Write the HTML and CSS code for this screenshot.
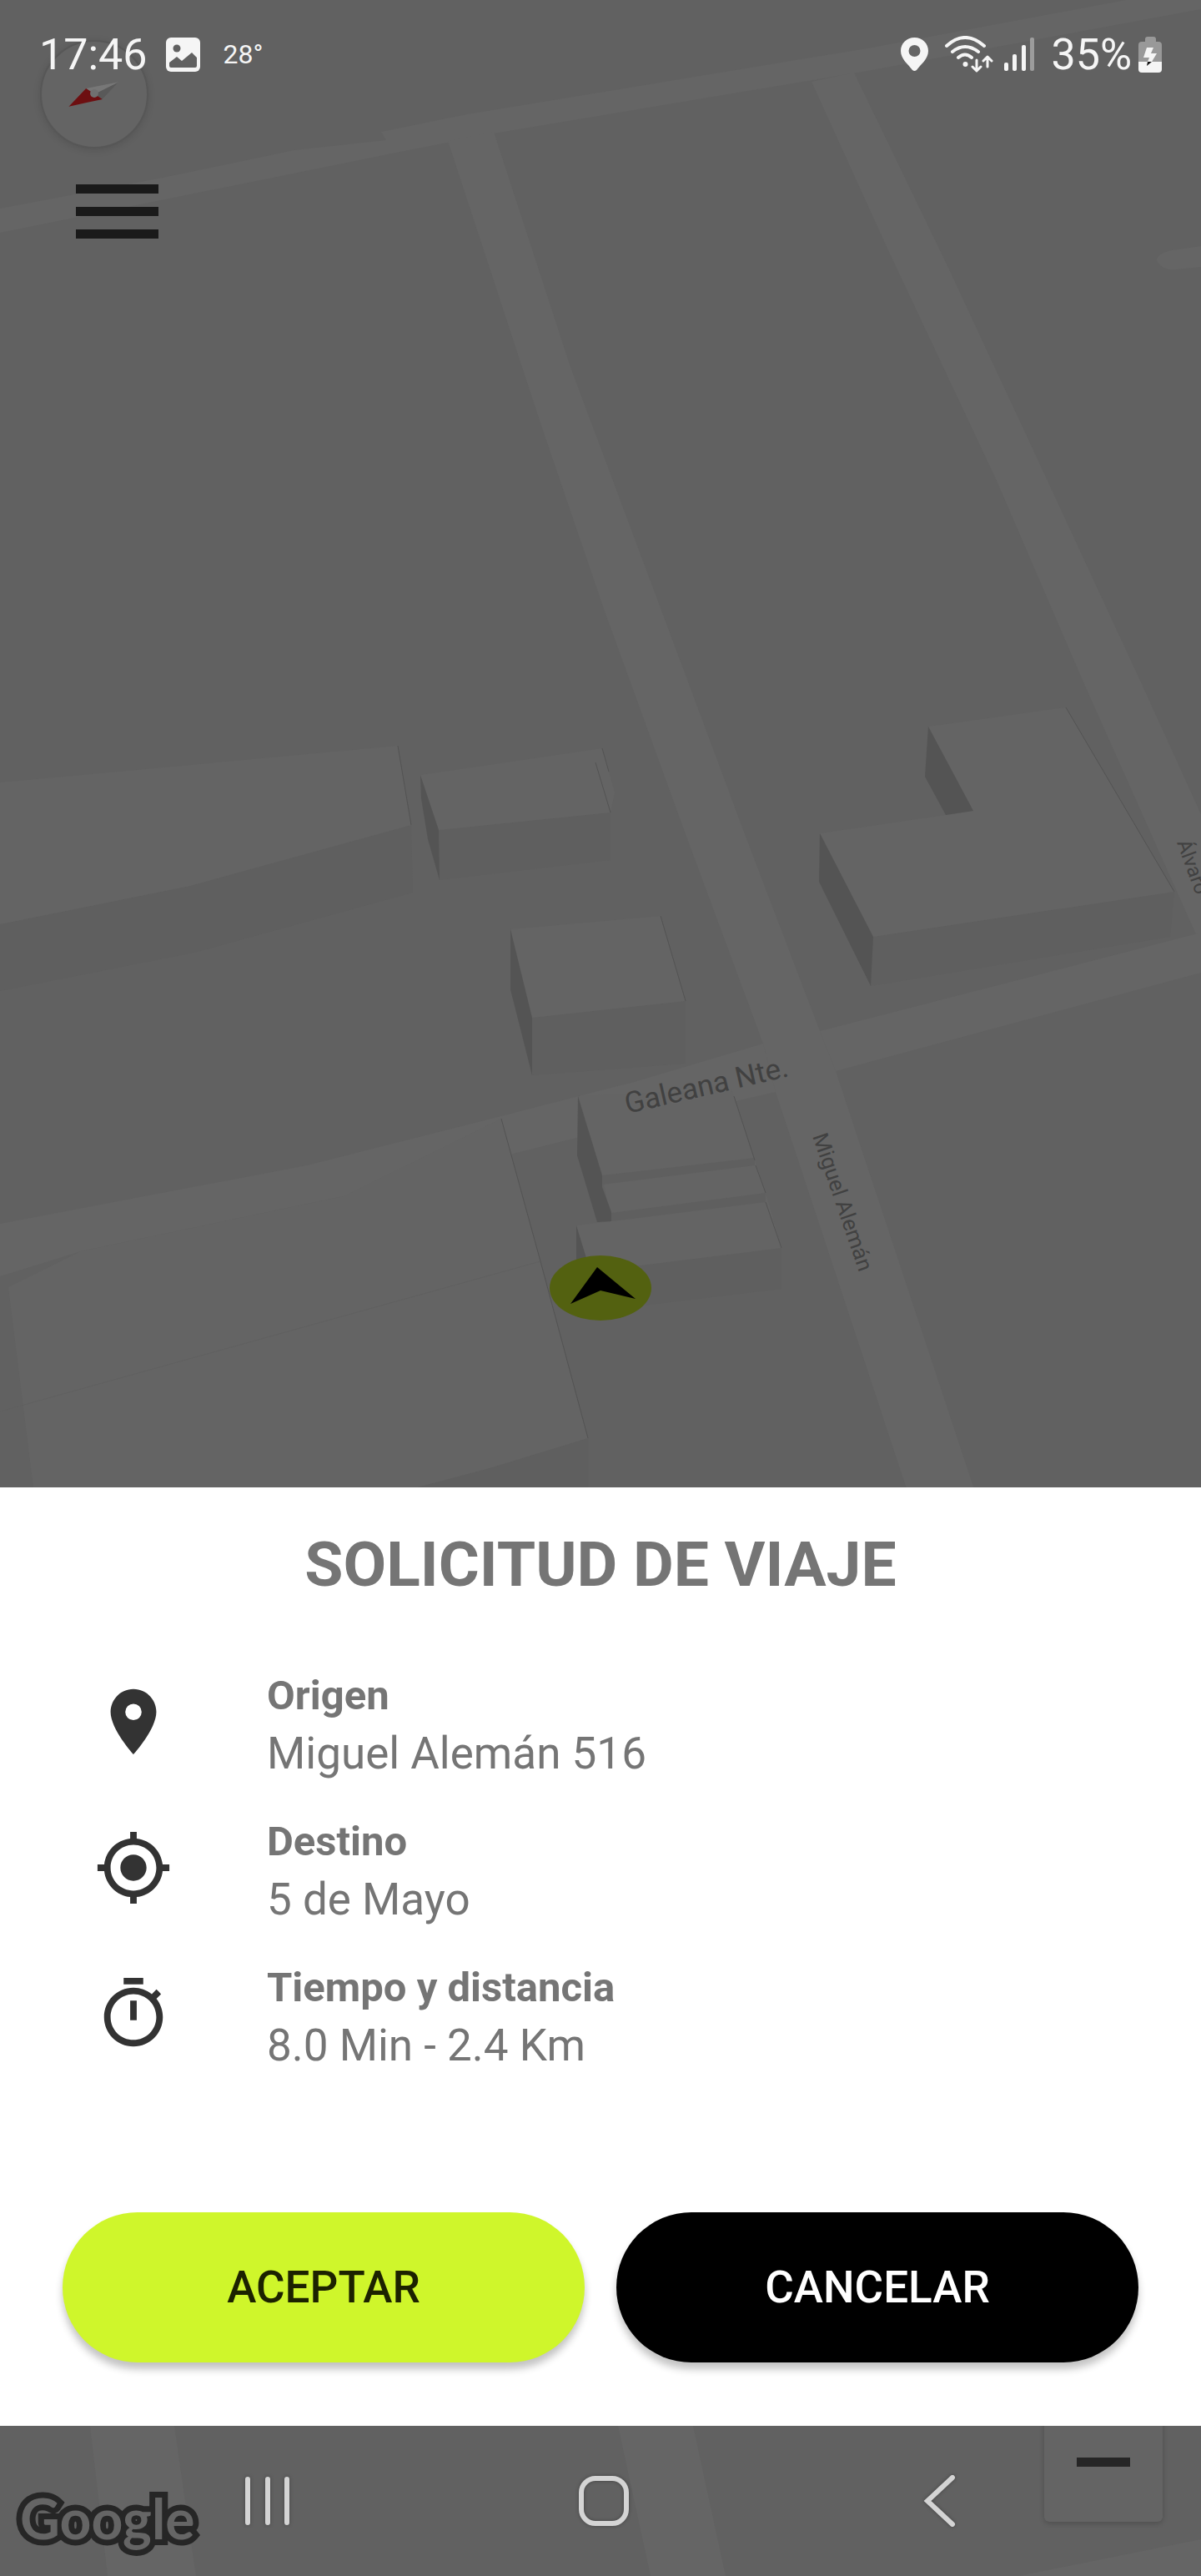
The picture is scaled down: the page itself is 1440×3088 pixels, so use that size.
FILE: index.html
```html
<!DOCTYPE html>
<html lang="es">
<head>
<meta charset="utf-8">
<meta name="viewport" content="width=device-width, initial-scale=1">
<title>Solicitud de viaje</title>
<link rel="stylesheet" href="styles.css">
</head>
<body>
<div class="screen">
  <svg class="map" viewBox="0 0 1440 3088" preserveAspectRatio="xMidYMid slice" role="img" aria-label="Mapa">
    <g class="road">
      <path d="M0 250L200 212L353 180L463 168L457 158L560 137L1040 58L1350 0H1440V11L1040 85L592 160L480 182L0 279Z"/>
      <path d="M537 169L592 158L684 440L826 820L893 1000L983 1236L1002 1284L1173 1800H1092L930 1309L915 1251L822 1000L725 733L647 504Z"/>
      <path d="M973 98L1024 87L1139 325L1240 542L1369 820L1440 976V1130L1434 1120L1300 820L1194 574L1065 300Z"/>
      <path d="M983 1236L1440 1118V1166L1002 1284Z"/>
      <path d="M0 1467L368 1397L601 1338L760 1297L915 1251L930 1309L691 1364L412 1434L97 1500L0 1530Z"/>
      <path d="M1440 295L1405 300Q1387 304 1387 312Q1392 324 1410 323L1440 320Z"/>
      <path d="M108 2908H209L235 3088H129ZM741 2908H831L870 3088H780ZM1221 3088L1440 3044V3088Z"/>
    </g>
    <g class="side">
      <path d="M0 1108L228 1062L493 989L495 1070L233 1142L0 1188Z"/>
      <path d="M526 995L732 974V1031L527 1055Z"/>
      <path d="M638 1220L822 1200V1275L638 1289Z"/>
      <path d="M1047 1123L1408 1069L1403 1123L1044 1182Z"/>
      <path d="M705 1724V1783H500L587 1760Z"/>
      <path d="M703 1525L937 1496V1545L703 1573Z"/>
    </g>
    <g class="roof">
      <path d="M0 938L477 894L493 989L228 1062L0 1108Z"/>
      <path d="M504 929L722 897L737 950L732 974L526 995Z"/>
      <path d="M612 1114L792 1098L822 1200L638 1220Z"/>
      <path d="M1113 871L1278 848L1408 1069L1047 1123L983 999L1167 972Z"/>
      <path d="M601 1341L648 1512L705 1724L587 1760L500 1783H40L10 1543L97 1500L412 1434Z"/>
      <path d="M693 1314L877 1306L918 1430L937 1496L703 1525L691 1469L733 1464L722 1409Z"/>
    </g>
    <g class="strip">
      <path d="M722 1409L905 1388V1397L722 1420Z"/>
      <path d="M733 1454L918 1430V1441L733 1464Z"/>
    </g>
    <g class="wall">
      <path d="M504 929L526 995L527 1055L513 1006L505 957Z"/>
      <path d="M612 1114L638 1220V1289L612 1186Z"/>
      <path d="M1113 871L1167 972L1134 977L1109 931Z"/>
      <path d="M983 999L1047 1123L1044 1182L982 1057Z"/>
      <path d="M693 1314L722 1409V1423L733 1453V1464L716 1465L692 1385Z"/>
      <path d="M691 1469L703 1508V1516L691 1512Z"/>
    </g>
    <g class="edge">
      <path d="M477 894L493 989M722 897L730 925M714 914L732 974M792 1098L822 1200M1278 848L1408 1069M601 1341L648 1512L705 1724M880 1314L905 1391M906 1397L918 1430M918 1441L937 1496"/>
      <path class="faint" d="M0 1692L648 1512M228 1062L233 1142M705 1724V1783"/>
    </g>
    <g class="street">
      <text font-size="35" transform="translate(752 1335) rotate(-13)">Galeana Nte.</text>
      <text font-size="26" transform="translate(974 1362) rotate(71)">Miguel Alemán</text>
      <text font-size="24" transform="translate(1411 1010) rotate(70)">Álvaro</text>
    </g>
    <ellipse cx="720" cy="1544" rx="61" ry="39" fill="#536110"/>
    <path d="M716 1519L762 1557L720 1547L684 1563Z"/>
  </svg>

  <button class="compass" type="button" aria-label="Orientar al norte">
    <svg viewBox="0 0 128 128" aria-hidden="true">
      <path d="M54 57L94 49L74 70Z" fill="#777"/>
      <path d="M64 64L94 49L74 70Z" fill="#595959"/>
      <path d="M33 79L54 57L74 70Q54 74 33 79Z" fill="#6d0f11"/>
      <circle cx="64" cy="63" r="5" fill="#707070"/>
    </svg>
  </button>

  <header class="status">
    <span class="clock">17:46</span>
    <svg class="picture" viewBox="0 0 41 41" aria-hidden="true">
      <rect width="41" height="41" rx="6" fill="#f5f5f5"/>
      <circle cx="13" cy="13" r="4.500" fill="#616161"/>
      <path d="M4 30L13 23L19 28L31 18L37 24V34Q37 36 35 36H6Q4 36 4 34Z" fill="#616161"/>
    </svg>
    <span class="temp">28°</span>
    <span class="spacer"></span>
    <svg class="place" viewBox="0 0 33 40" aria-hidden="true">
      <path fill="#f5f5f5" fill-rule="evenodd" d="M16.500 0C7 0 0 7 0 16C0 26 9 32 14 39Q16.500 41 19 39C24 32 33 26 33 16C33 7 26 0 16.500 0ZM16.500 9A7 7 0 1 1 16.500 23A7 7 0 1 1 16.500 9Z"/>
    </svg>
    <svg class="wifi" viewBox="0 0 58 44" aria-hidden="true">
      <g fill="none" stroke="#f5f5f5" stroke-width="4" stroke-linecap="round" stroke-linejoin="round">
        <path d="M2 12Q24 -8 47 12M9 19Q24 7 40 19M16 26Q24 19 32 26"/>
        <path stroke-width="3" d="M38 29V41M33 37L38 42L43 37M51 37V25M46 30L51 25L56 30"/>
      </g>
      <circle cx="24.500" cy="34" r="3" fill="#f5f5f5"/>
    </svg>
    <svg class="signal" viewBox="0 0 36 40" aria-hidden="true">
      <g fill="#f5f5f5">
        <rect y="30" width="5" height="10" rx="2"/>
        <rect x="10" y="20" width="5" height="20" rx="2"/>
        <rect x="21" y="9" width="5" height="31" rx="2"/>
        <rect x="31" width="5" height="40" rx="2" opacity=".4"/>
      </g>
    </svg>
    <span class="percent">35%</span>
    <svg class="battery" viewBox="0 0 28 43" aria-hidden="true">
      <path d="M8 6V3Q8 0 11 0H18Q21 0 21 3V6H24Q28 6 28 10V30H0V10Q0 6 4 6Z" fill="#999"/>
      <path d="M0 30H28V39Q28 43 24 43H4Q0 43 0 39Z" fill="#f5f5f5"/>
      <path d="M10 13H18L15 20H22L16 30H11L13 25H6Z" fill="#f5f5f5"/>
      <path d="M11 30H16L10 35Z" fill="#111"/>
    </svg>
  </header>

  <button class="menu" type="button" aria-label="Menú">
    <span class="bar"></span><span class="bar"></span><span class="bar"></span>
  </button>

  <button class="zoom-out" type="button" aria-label="Alejar"><span class="minus"></span></button>

  <main class="sheet">
    <h1 class="title">SOLICITUD DE VIAJE</h1>
    <ul class="details">
      <li class="detail">
        <svg class="icon" viewBox="0 0 24 24" aria-hidden="true"><path d="M12 2C8.130 2 5 5.130 5 9c0 5.250 7 13 7 13s7-7.750 7-13c0-3.870-3.130-7-7-7zm0 9.500a2.500 2.500 0 0 1 0-5 2.500 2.500 0 0 1 0 5z"/></svg>
        <div><h2 class="label">Origen</h2><p class="value">Miguel Alemán 516</p></div>
      </li>
      <li class="detail">
        <svg class="icon" viewBox="0 0 24 24" aria-hidden="true"><path d="M12 8c-2.210 0-4 1.790-4 4s1.790 4 4 4 4-1.790 4-4-1.790-4-4-4zm8.940 3c-.46-4.170-3.770-7.480-7.940-7.940V1h-2v2.060C6.830 3.520 3.520 6.830 3.060 11H1v2h2.060c.46 4.170 3.770 7.480 7.940 7.940V23h2v-2.060c4.170-.46 7.480-3.770 7.940-7.940H23v-2h-2.060zM12 19c-3.870 0-7-3.130-7-7s3.130-7 7-7 7 3.130 7 7-3.130 7-7 7z"/></svg>
        <div><h2 class="label">Destino</h2><p class="value">5 de Mayo</p></div>
      </li>
      <li class="detail">
        <svg class="icon" viewBox="0 0 24 24" aria-hidden="true"><path d="M15 1H9v2h6V1zm-4 13h2V8h-2v6zm8.030-6.610l1.420-1.420c-.43-.51-.9-.99-1.410-1.410l-1.420 1.420C16.070 4.740 14.120 4 12 4c-4.970 0-9 4.030-9 9s4.020 9 9 9 9-4.030 9-9c0-2.120-.74-4.070-1.970-5.610zM12 20c-3.870 0-7-3.130-7-7s3.130-7 7-7 7 3.130 7 7-3.130 7-7 7z"/></svg>
        <div><h2 class="label">Tiempo y distancia</h2><p class="value">8.0 Min - 2.4 Km</p></div>
      </li>
    </ul>
    <div class="actions">
      <button class="action accept" type="button">ACEPTAR</button>
      <button class="action cancel" type="button">CANCELAR</button>
    </div>
  </main>

  <svg class="google" viewBox="0 0 240 100" role="img" aria-label="Google">
    <text x="24" y="56">Google</text>
  </svg>

  <nav class="system">
    <button class="key" type="button" aria-label="Recientes">
      <svg viewBox="0 0 60 62" aria-hidden="true"><path d="M6 5V57M30 5V57M53 5V57"/></svg>
    </button>
    <button class="key" type="button" aria-label="Inicio">
      <svg viewBox="0 0 60 62" aria-hidden="true"><rect x="3" y="4" width="54" height="54" rx="17"/></svg>
    </button>
    <button class="key" type="button" aria-label="Atrás">
      <svg viewBox="0 0 60 62" aria-hidden="true"><path d="M45 3L15 31L45 59"/></svg>
    </button>
  </nav>
</div>
</body>
</html>
```
FILE: styles.css
```css
* {
  box-sizing: border-box;
}

body {
  margin: 0;
  font-family: Roboto, "Liberation Sans", sans-serif;
}

button {
  margin: 0;
  padding: 0;
  border: 0;
  background: none;
  font: inherit;
  cursor: pointer;
}

svg {
  display: block;
}

.screen {
  position: relative;
  display: flex;
  flex-direction: column;
  min-height: 100vh;
  overflow: hidden;
  background: #616161;
}

/* Map backdrop */
.map {
  position: absolute;
  inset: 0;
  width: 100%;
  height: 100%;
}

.road { fill: #656565; }
.side { fill: #5f5f5f; }
.roof { fill: #646464; }
.strip { fill: #5f5f5f; }
.wall { fill: #545454; }

.edge {
  fill: none;
  stroke: #535353;
  stroke-width: 1;
}

.faint {
  stroke: #606060;
}

.street {
  fill: #414141;
  stroke: #656565;
  stroke-width: 4;
  paint-order: stroke;
}

.compass {
  position: absolute;
  top: 48px;
  left: 48px;
  width: 130px;
  height: 130px;
  border: 2px solid #575757;
  border-radius: 50%;
  background: #646464;
  box-shadow: 0 2px 10px rgba(0, 0, 0, .12);
}

.compass svg {
  width: 100%;
}

/* Status bar */
.status {
  position: relative;
  display: flex;
  align-items: center;
  height: 130px;
  padding: 0 47px;
  color: #f5f5f5;
  font-size: 52px;
}

.picture {
  width: 41px;
  height: 41px;
  margin-left: 22px;
}

.temp {
  margin-left: 28px;
  font-size: 32px;
}

.spacer { flex: 1; }

.place {
  width: 33px;
  height: 40px;
  margin-right: 20px;
}

.wifi {
  width: 58px;
  height: 44px;
  margin-right: 13px;
}

.signal {
  width: 36px;
  height: 40px;
  margin-right: 20px;
}

.battery {
  width: 28px;
  height: 43px;
  margin-left: 8px;
}

/* Floating map controls */
.menu {
  position: relative;
  display: flex;
  flex-direction: column;
  gap: 16px;
  width: 99px;
  margin: 91px 0 0 91px;
}

.bar {
  height: 11px;
  background: #1a1a1a;
}

.zoom-out {
  position: absolute;
  right: 46px;
  bottom: 65px;
  display: flex;
  align-items: center;
  justify-content: center;
  width: 142px;
  height: 144px;
  border-radius: 6px;
  background: #646464;
  box-shadow: 0 2px 6px rgba(0, 0, 0, .2);
}

.minus {
  width: 64px;
  height: 11px;
  background: #262626;
}

/* Trip request sheet */
.sheet {
  position: relative;
  margin-top: auto;
  padding: 48px 75px 76px;
  background: #fff;
  color: #757575;
}

.title {
  margin: 0 0 76px;
  font-size: 75px;
  font-weight: 700;
  line-height: 88px;
  text-align: center;
}

.details {
  display: grid;
  gap: 37px;
  margin: 0 0 169px;
  padding: 0 38px;
  list-style: none;
}

.detail {
  display: flex;
  align-items: center;
  gap: 113px;
}

.icon {
  width: 94px;
  height: 94px;
  fill: #333;
}

.label {
  margin: 0;
  font-size: 49px;
  font-weight: 700;
  line-height: 76px;
}

.value {
  margin: 0;
  font-size: 53px;
  line-height: 62px;
}

.actions {
  display: grid;
  grid-template-columns: 1fr 1fr;
  gap: 38px;
}

.action {
  height: 180px;
  border-radius: 90px;
  box-shadow: 0 8px 10px rgba(0, 0, 0, .24);
  font-size: 53px;
  font-weight: 500;
}

.accept {
  background: #cff62b;
  color: #1c2200;
}

.cancel {
  background: #000;
  color: #fff;
}

/* Map attribution */
.google {
  position: absolute;
  bottom: 0;
  left: 0;
  width: 240px;
  height: 100px;
  overflow: visible;
}

.google text {
  fill: #656565;
  stroke: #262626;
  stroke-width: 14;
  paint-order: stroke;
  font-family: Lato, sans-serif;
  font-size: 66px;
  font-weight: 700;
}

/* System navigation */
.system {
  position: relative;
  display: grid;
  grid-template-columns: repeat(3, 1fr);
  height: 180px;
  padding: 0 112px 0 119px;
}

.key {
  display: flex;
  align-items: center;
  justify-content: center;
}

.key svg {
  width: 60px;
  height: 62px;
  fill: none;
  stroke: #d4d4d4;
  stroke-width: 6;
  stroke-linecap: round;
  filter: drop-shadow(0 0 2px rgba(0, 0, 0, .3));
}
```
